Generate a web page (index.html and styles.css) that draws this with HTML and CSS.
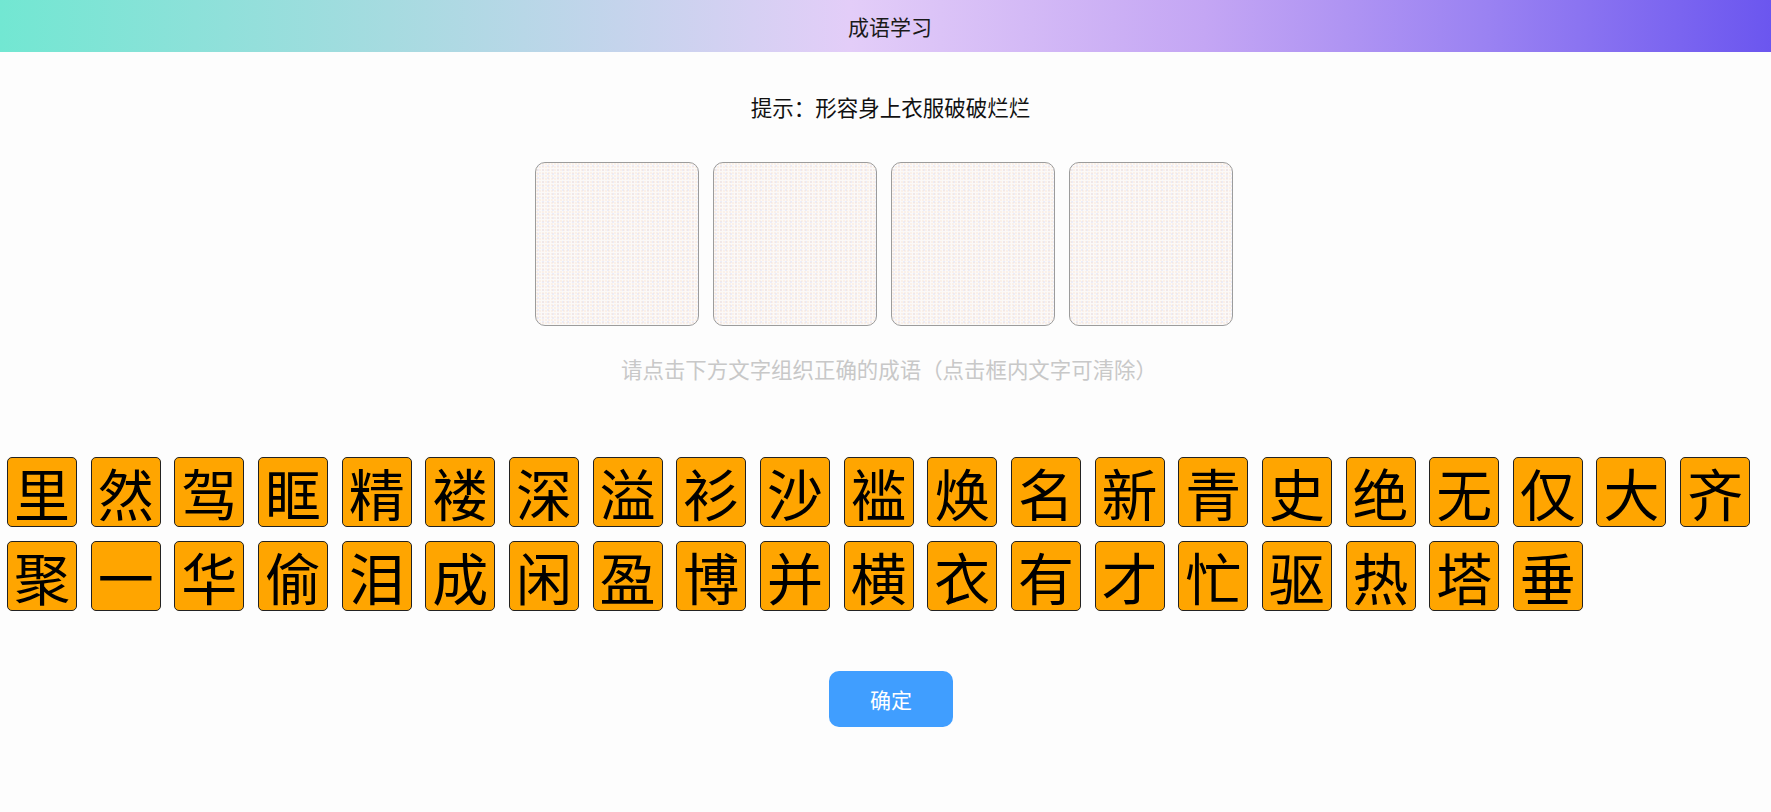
FILE: index.html
```html
<!DOCTYPE html>
<html lang="zh">
<head>
<meta charset="utf-8">
<title>成语学习</title>
<link rel="stylesheet" href="styles.css">
</head>
<body>
<header class="topbar"><span class="title">成语学习</span></header>
<main class="game">
  <p class="hint">提示：形容身上衣服破破烂烂</p>
  <div class="slots">
    <div class="slot"></div>
    <div class="slot"></div>
    <div class="slot"></div>
    <div class="slot"></div>
  </div>
  <p class="tip">请点击下方文字组织正确的成语（点击框内文字可清除）</p>
  <div class="tiles">
    <span class="tile">里</span><span class="tile">然</span><span class="tile">驾</span><span class="tile">眶</span><span class="tile">精</span><span class="tile">褛</span><span class="tile">深</span><span class="tile">溢</span><span class="tile">衫</span><span class="tile">沙</span><span class="tile">褴</span><span class="tile">焕</span><span class="tile">名</span><span class="tile">新</span><span class="tile">青</span><span class="tile">史</span><span class="tile">绝</span><span class="tile">无</span><span class="tile">仅</span><span class="tile">大</span><span class="tile">齐</span>
    <span class="tile">聚</span><span class="tile">一</span><span class="tile">华</span><span class="tile">偷</span><span class="tile">泪</span><span class="tile">成</span><span class="tile">闲</span><span class="tile">盈</span><span class="tile">博</span><span class="tile">并</span><span class="tile">横</span><span class="tile">衣</span><span class="tile">有</span><span class="tile">才</span><span class="tile">忙</span><span class="tile">驱</span><span class="tile">热</span><span class="tile">塔</span><span class="tile">垂</span>
  </div>
  <div class="actions">
    <button class="confirm" type="button">确定</button>
  </div>
</main>
</body>
</html>
```
FILE: styles.css
```css
html, body {
  margin: 0;
  padding: 0;
  background: #fdfdfd;
}
body {
  font-family: "Noto Sans CJK SC", "Noto Sans", sans-serif;
  color: #111;
}
.topbar {
  height: 52px;
  display: flex;
  align-items: center;
  justify-content: center;
  background: linear-gradient(90deg, #72e7d2 0%, #a6dbe0 22%, #e3cdf8 48%, #c4a6f4 68%, #9a82f2 84%, #6b56ef 100%);
}
.title {
  font-size: 21px;
  color: #1a1a1a;
  padding-left: 9px;
}
.game {
  display: flex;
  flex-direction: column;
  align-items: center;
}
.hint {
  margin: 40px 0 0;
  font-size: 21.5px;
  line-height: 30px;
  color: #111;
  padding-left: 10px;
}
.slots {
  margin-top: 40px;
  margin-right: 3px;
  display: flex;
  gap: 14px;
}
.slot {
  width: 162px;
  height: 162px;
  border: 1px solid #9c9c9c;
  border-radius: 10px;
  background-color: #fbf9f8;
  background-image: radial-gradient(circle at 1px 1px, rgba(250, 215, 190, 0.28) 0.7px, transparent 1px),
                    radial-gradient(circle at 2px 3px, rgba(200, 205, 245, 0.3) 0.7px, transparent 1px);
  background-size: 3px 3px, 5px 4px;
}
.tip {
  margin: 28px 0 0;
  font-size: 21.45px;
  line-height: 30px;
  color: #c8c8c8;
  padding-left: 7px;
}
.tiles {
  align-self: stretch;
  margin-top: 73px;
  padding: 0 7px;
  display: flex;
  flex-wrap: wrap;
  gap: 13.67px 13.67px;
}
.tile {
  box-sizing: border-box;
  width: 70px;
  height: 70px;
  border: 1px solid #222;
  border-radius: 5px;
  background: #ffa500;
  color: #000;
  font-size: 56px;
  line-height: 68px;
  text-align: center;
}
.actions {
  margin-top: 60px;
  padding-left: 11px;
}
.confirm {
  width: 124px;
  height: 56px;
  border: none;
  border-radius: 10px;
  background: #409eff;
  color: #fff;
  font-family: "Noto Sans CJK SC", sans-serif;
  font-size: 21px;
}
```
